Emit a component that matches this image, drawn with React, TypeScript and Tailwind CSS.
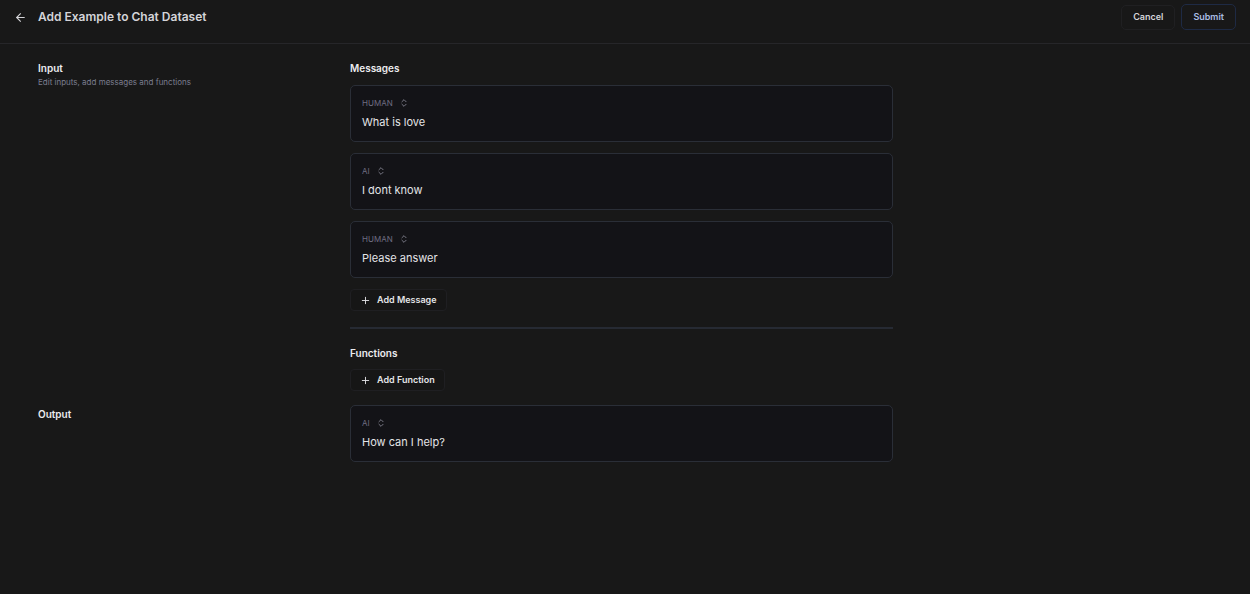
import { ArrowLeft, ChevronsUpDown, Plus } from "lucide-react"

const messages = [
  { role: "HUMAN", text: "What is love" },
  { role: "AI", text: "I dont know" },
  { role: "HUMAN", text: "Please answer" },
]

function MessageCard({ role, text }: { role: string; text: string }) {
  return (
    <div className="h-[57px] rounded-[5px] border border-[#2a2e37] bg-[#131317] px-[11px] pt-[11px]">
      <div className="flex items-center gap-[6px] text-[8px] leading-[12px] text-[#6f6d82]">
        <span>{role}</span>
        <ChevronsUpDown size={10} strokeWidth={2} className="text-[#8a8a99]" />
      </div>
      <p className="mt-[6px] text-[11px] leading-[14px] text-[#e4e4e7]">{text}</p>
    </div>
  )
}

function AddButton({ label }: { label: string }) {
  return (
    <button className="flex h-[22px] items-center gap-[6px] rounded-[4px] border border-[#1f1f22] bg-[#161616] px-[9px] text-[9px] font-semibold text-[#e4e4e7]">
      <Plus size={11} strokeWidth={2} />
      {label}
    </button>
  )
}

export default function App() {
  return (
    <div className="h-[594px] w-full bg-[#181818] font-['Inter',sans-serif] text-[#ececef]">
      <header className="flex h-[44px] items-center justify-between border-b border-[#262629] pb-[9px] pl-[14px] pr-[14px]">
        <div className="flex items-center gap-[11px]">
          <ArrowLeft size={13} strokeWidth={2} className="text-[#d4d4d8]" />
          <h1 className="text-[12px] font-semibold text-[#d4d4d8]">Add Example to Chat Dataset</h1>
        </div>
        <div className="flex items-center gap-[6px]">
          <button className="h-[25px] rounded-[5px] border border-[#202022] px-[11px] text-[9px] font-semibold text-[#d4d4d8]">
            Cancel
          </button>
          <button className="h-[26px] rounded-[5px] border border-[#1e2a44] px-[11px] text-[9px] font-semibold text-[#a9bde3]">
            Submit
          </button>
        </div>
      </header>

      <main className="grid grid-cols-[312px_543px] pl-[38px] pt-[17px]">
        <div>
          <h2 className="text-[10px] font-semibold leading-[14px]">Input</h2>
          <p className="mt-[1px] text-[8px] leading-[12px] text-[#7b7d8f]">Edit inputs, add messages and functions</p>
        </div>
        <div>
          <h3 className="mb-[10px] text-[10px] font-semibold leading-[14px]">Messages</h3>
          <div className="flex flex-col gap-[11px]">
            {messages.map((m, i) => (
              <MessageCard key={i} role={m.role} text={m.text} />
            ))}
          </div>
          <div className="mt-[11px]">
            <AddButton label="Add Message" />
          </div>
          <div className="mt-[16px] h-[2px] bg-[#262a33]" />
          <h3 className="mt-[17px] text-[10px] font-semibold leading-[14px]">Functions</h3>
          <div className="mt-[9px]">
            <AddButton label="Add Function" />
          </div>
        </div>

        <div className="pt-[16px]">
          <h2 className="text-[10px] font-semibold leading-[14px]">Output</h2>
        </div>
        <div className="pt-[14px]">
          <MessageCard role="AI" text="How can I help?" />
        </div>
      </main>
    </div>
  )
}
